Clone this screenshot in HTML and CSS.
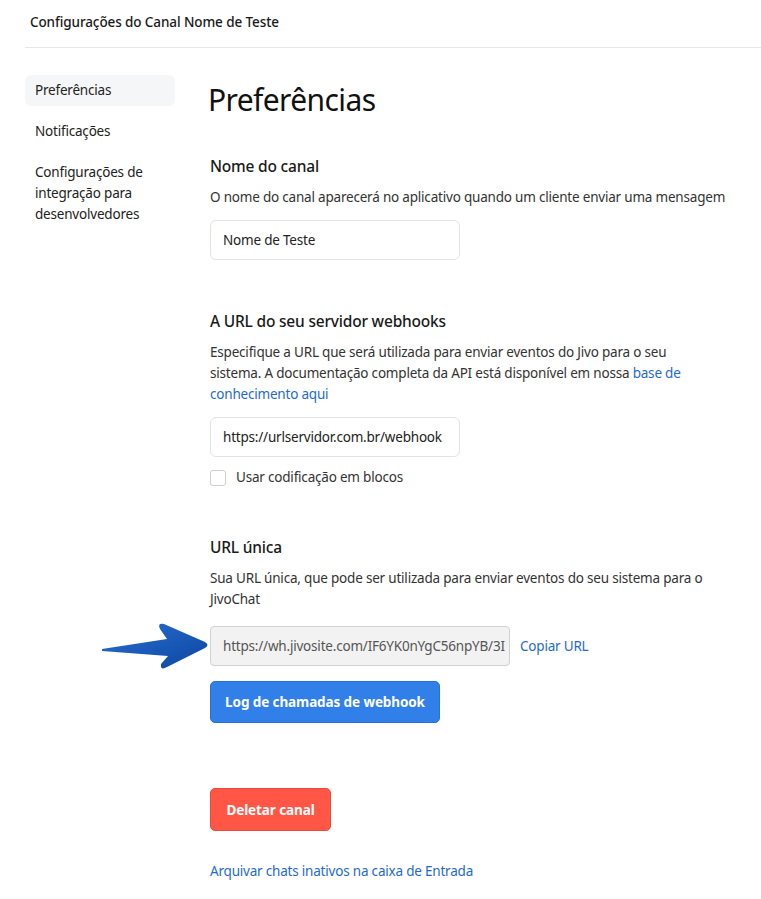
FILE: index.html
```html
<!DOCTYPE html>
<html lang="pt-BR">
<head>
<meta charset="utf-8">
<title>Configurações do Canal</title>
<link rel="stylesheet" href="styles.css">
</head>
<body>
<div class="page">
  <header class="topbar">Configurações do Canal Nome de Teste</header>
  <div class="layout">
    <nav class="sidebar">
      <a class="nav-item active">Preferências</a>
      <a class="nav-item">Notificações</a>
      <a class="nav-item">Configurações de<br>integração para<br>desenvolvedores</a>
    </nav>
    <main class="main">
      <h1 class="page-title">Preferências</h1>

      <section class="section first">
        <h2 class="section-title">Nome do canal</h2>
        <p class="desc">O nome do canal aparecerá no aplicativo quando um cliente enviar uma mensagem</p>
        <div class="field">Nome de Teste</div>
      </section>

      <section class="section">
        <h2 class="section-title">A URL do seu servidor webhooks</h2>
        <p class="desc">Especifique a URL que será utilizada para enviar eventos do Jivo para o seu<br>sistema. A documentação completa da API está disponível em nossa <a class="link">base de<br>conhecimento aqui</a></p>
        <div class="field">https://urlservidor.com.br/webhook</div>
        <label class="check-row"><span class="checkbox"></span>Usar codificação em blocos</label>
      </section>

      <section class="section third">
        <h2 class="section-title">URL única</h2>
        <p class="desc">Sua URL única, que pode ser utilizada para enviar eventos do seu sistema para o<br>JivoChat</p>
        <div class="url-row">
          <svg class="arrow" width="110" height="52" viewBox="0 0 110 52" aria-hidden="true">
            <defs>
              <linearGradient id="ag" x1="0" y1="0" x2="1" y2="1">
                <stop offset="0" stop-color="#2a6fd2"/>
                <stop offset="1" stop-color="#0b469f"/>
              </linearGradient>
            </defs>
            <path d="M2 28 L67 18 L60 8 Q57 2 64 3 L105 21 Q110 24 105 27 L67 46 Q60 50 61 43 L68 35 L2 30 Z" fill="url(#ag)"/>
          </svg>
          <div class="field readonly">https://wh.jivosite.com/IF6YK0nYgC56npYB/3I</div>
          <a class="link copy">Copiar URL</a>
        </div>
        <button class="btn btn-blue">Log de chamadas de webhook</button>
      </section>

      <button class="btn btn-red">Deletar canal</button>
      <a class="link archive">Arquivar chats inativos na caixa de Entrada</a>
    </main>
  </div>
</div>
</body>
</html>
```

FILE: styles.css
```css
* { box-sizing: border-box; }
body {
  margin: 0;
  background: #fff;
  font-family: "Noto Sans", "Open Sans", sans-serif;
  color: #1c1c1c;
  font-size: 13.5px;
  letter-spacing: -0.2px;
}
.page { padding-left: 25px; }
.topbar {
  height: 48px;
  padding: 0 5px 4px;
  display: flex;
  align-items: center;
  font-size: 13.5px;
  font-weight: 500;
  letter-spacing: -0.1px;
  color: #1a1a1a;
  border-bottom: 1px solid #e6e6e6;
}
.layout {
  display: flex;
  gap: 35px;
  padding-top: 26px;
}
.sidebar {
  width: 150px;
  flex: none;
  display: flex;
  flex-direction: column;
  gap: 10px;
  padding-top: 1px;
}
.nav-item {
  display: block;
  padding: 5px 10px;
  line-height: 21px;
  color: #222;
  border-radius: 6px;
}
.nav-item.active { background: #f5f6f8; }
.main {
  flex: 1;
  display: flex;
  flex-direction: column;
  align-items: flex-start;
}
.page-title {
  margin: 6px 0 0 -2px;
  font-size: 30px;
  line-height: 40px;
  font-weight: 400;
  letter-spacing: -0.6px;
  color: #111;
}
.section { margin-top: 49px; display: flex; flex-direction: column; align-items: flex-start; }
.section.first { margin-top: 34px; }
.section.third { margin-top: 47px; }
.section-title {
  margin: 0;
  font-size: 15.5px;
  line-height: 24px;
  font-weight: 500;
  letter-spacing: -0.2px;
  color: #1a1a1a;
}
.desc {
  margin: 9px 0 0;
  line-height: 21px;
  color: #333;
  white-space: nowrap;
}
.link { color: #1f6ad0; text-decoration: none; cursor: pointer; }
.field {
  margin-top: 12px;
  width: 250px;
  height: 40px;
  border: 1px solid #e3e3e3;
  border-radius: 6px;
  padding: 0 12px;
  display: flex;
  align-items: center;
  color: #222;
  white-space: nowrap;
  overflow: hidden;
}
.check-row {
  margin-top: 10px;
  display: flex;
  align-items: center;
  gap: 10px;
  line-height: 21px;
  color: #333;
}
.checkbox {
  width: 16px;
  height: 16px;
  border: 1px solid #cfcfcf;
  border-radius: 3px;
  background: #fff;
}
.url-row {
  position: relative;
  margin-top: 16px;
  display: flex;
  align-items: center;
  gap: 10px;
}
.url-row .field { margin-top: 0; }
.field.readonly {
  width: 300px;
  background: #f2f2f2;
  border-color: #d2d2d2;
  border-radius: 4px;
  color: #555;
}
.arrow {
  position: absolute;
  left: -110px;
  top: -5px;
}
.btn {
  border: 1px solid transparent;
  border-radius: 5px;
  font-family: inherit;
  font-size: 13.5px;
  letter-spacing: -0.1px;
  font-weight: 700;
  color: #fff;
  padding: 0;
  white-space: nowrap;
  cursor: pointer;
}
.btn-blue {
  margin-top: 15px;
  height: 42px;
  width: 230px;
  background: #3180ea;
  border-color: #2a71d4;
}
.btn-red {
  margin-top: 65px;
  height: 43px;
  width: 121px;
  background: #ff5646;
  border-color: #ea4a3c;
}
.archive {
  margin-top: 30px;
  line-height: 21px;
}
```
